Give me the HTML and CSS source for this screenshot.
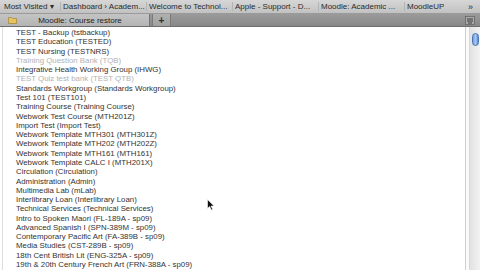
FILE: index.html
```html
<!DOCTYPE html>
<html>
<head>
<meta charset="utf-8">
<link rel="stylesheet" href="styles.css">
</head>
<body>
<div class="window">
  <div class="bookmarks">
    <span class="bm first">Most Visited ▾</span>
    <span class="sep"></span>
    <span class="bm">Dashboard › Academ...</span>
    <span class="sep"></span>
    <span class="bm">Welcome to Technol...</span>
    <span class="sep"></span>
    <span class="bm">Apple - Support - D...</span>
    <span class="sep"></span>
    <span class="bm">Moodle: Academic ...</span>
    <span class="sep"></span>
    <span class="bm last">MoodleUP</span>
    <span class="more">»</span>
  </div>
  <div class="tabbar">
    <div class="tab active">
      <svg class="favicon" width="9" height="8" viewBox="0 0 9 8"><path d="M0.5 1.5h3l1 1h4v5h-8z" fill="#e8c35a" stroke="#9a7a2a" stroke-width="0.6"/></svg>
      <span class="tab-title">Moodle: Course restore</span>
    </div>
    <div class="tab newtab">+</div>
    <div class="tab-spacer"></div>
    <svg class="tablist" width="10" height="9" viewBox="0 0 10 9"><rect x="0.5" y="0.5" width="9" height="8" fill="#a9a9a9" stroke="#555" stroke-width="0.6"/><path d="M2 3h6M2 5h6M3 7h4" stroke="#222" stroke-width="0.8"/></svg>
  </div>
  <div class="viewport">
    <div class="page">
      <ul class="courses">
        <li>TEST - Backup (tstbackup)</li>
        <li>TEST Education (TESTED)</li>
        <li>TEST Nursing (TESTNRS)</li>
        <li class="hidden">Training Question Bank (TQB)</li>
        <li>Integrative Health Working Group (IHWG)</li>
        <li class="hidden">TEST Quiz test bank (TEST QTB)</li>
        <li>Standards Workgroup (Standards Workgroup)</li>
        <li>Test 101 (TEST101)</li>
        <li>Training Course (Training Course)</li>
        <li>Webwork Test Course (MTH201Z)</li>
        <li>Import Test (Import Test)</li>
        <li>Webwork Template MTH301 (MTH301Z)</li>
        <li>Webwork Template MTH202 (MTH202Z)</li>
        <li>Webwork Template MTH161 (MTH161)</li>
        <li>Webwork Template CALC I (MTH201X)</li>
        <li>Circulation (Circulation)</li>
        <li>Administration (Admin)</li>
        <li>Multimedia Lab (mLab)</li>
        <li>Interlibrary Loan (Interlibrary Loan)</li>
        <li>Technical Services (Technical Services)</li>
        <li>Intro to Spoken Maori (FL-189A - sp09)</li>
        <li>Advanced Spanish I (SPN-389M - sp09)</li>
        <li>Contemporary Pacific Art (FA-389B - sp09)</li>
        <li>Media Studies (CST-289B - sp09)</li>
        <li>18th Cent British Lit (ENG-325A - sp09)</li>
        <li>19th &amp; 20th Century French Art (FRN-388A - sp09)</li>
      </ul>
    </div>
    <div class="gutter"></div>
    <div class="scrollbar"><div class="thumb"></div></div>
    <svg class="cursor" width="8" height="12" viewBox="0 0 8 12"><path d="M0.5 0.5v9l2.2-2 1.6 3.6 1.4-0.6-1.6-3.5h3z" fill="#111" stroke="#fff" stroke-width="0.6"/></svg>
  </div>
</div>
</body>
</html>
```
FILE: styles.css
```css
* { box-sizing: border-box; }
html, body { margin: 0; padding: 0; }
body {
  width: 480px;
  height: 270px;
  overflow: hidden;
  background: #fff;
  font-family: "Liberation Sans", Arial, sans-serif;
}
.window { display: flex; flex-direction: column; height: 270px; }

.bookmarks {
  height: 14px;
  flex: none;
  display: flex;
  align-items: center;
  background: linear-gradient(#d6d6d6, #c2c2c2);
  border-bottom: 1px solid #9a9a9a;
  font-size: 8px;
  color: #2a2a2a;
  padding-left: 4px;
  white-space: nowrap;
}
.bm { flex: none; width: 85px; padding-left: 2px; overflow: hidden; }
.bm.first { width: 56px; padding-left: 0; }
.bm.last { width: auto; }
.sep { flex: none; width: 1px; height: 9px; background: #b4b4b4; }
.more { margin-left: auto; padding-right: 7px; font-size: 9px; }

.tabbar {
  height: 13px;
  flex: none;
  display: flex;
  align-items: stretch;
  background: linear-gradient(#9a9a9a, #888);
  border-bottom: 1px solid #6e6e6e;
}
.tab {
  display: flex;
  align-items: center;
  font-size: 8px;
  color: #1e1e1e;
}
.tab.active {
  width: 150px;
  background: linear-gradient(#c4c4c4, #b4b4b4);
  border-right: 1px solid #777;
  padding-left: 8px;
}
.favicon { flex: none; }
.tab-title { flex: 1; text-align: center; padding-right: 6px; }
.newtab {
  width: 19px;
  justify-content: center;
  margin-left: 2px;
  background: linear-gradient(#b0b0b0, #a2a2a2);
  border-left: 1px solid #7a7a7a;
  border-right: 1px solid #7a7a7a;
  font-size: 10px;
  font-weight: bold;
  color: #333;
}
.tab-spacer { flex: 1; }
.tablist { align-self: center; margin-right: 5px; }

.viewport {
  flex: 1;
  display: flex;
  position: relative;
  min-height: 0;
}
.page {
  flex: 1;
  border-left: 1px solid #ddd;
  margin-left: 2px;
  border-right: 1px solid #cfcfcf;
  background: #fff;
}
.courses {
  list-style: none;
  margin: 0;
  padding: 1px 0 0 13px;
  font-size: 7.85px;
  line-height: 9.28px;
  color: #333;
}
.courses li { white-space: nowrap; }
.courses li.hidden { color: #b2b2b2; }
.gutter { width: 4px; background: #fafafa; border-right: 1px solid #d8d8d8; }
.scrollbar {
  width: 10px;
  background: linear-gradient(90deg, #e2e2e2, #f2f2f2);
  padding: 6px 1px 0 2px;
}
.thumb {
  height: 13px;
  border-radius: 4px;
  background: linear-gradient(90deg, #6a9be0, #a8c8f2 50%, #5a8bd6);
  border: 1px solid #4a74b0;
}
.cursor { position: absolute; left: 207px; top: 172px; }
```
